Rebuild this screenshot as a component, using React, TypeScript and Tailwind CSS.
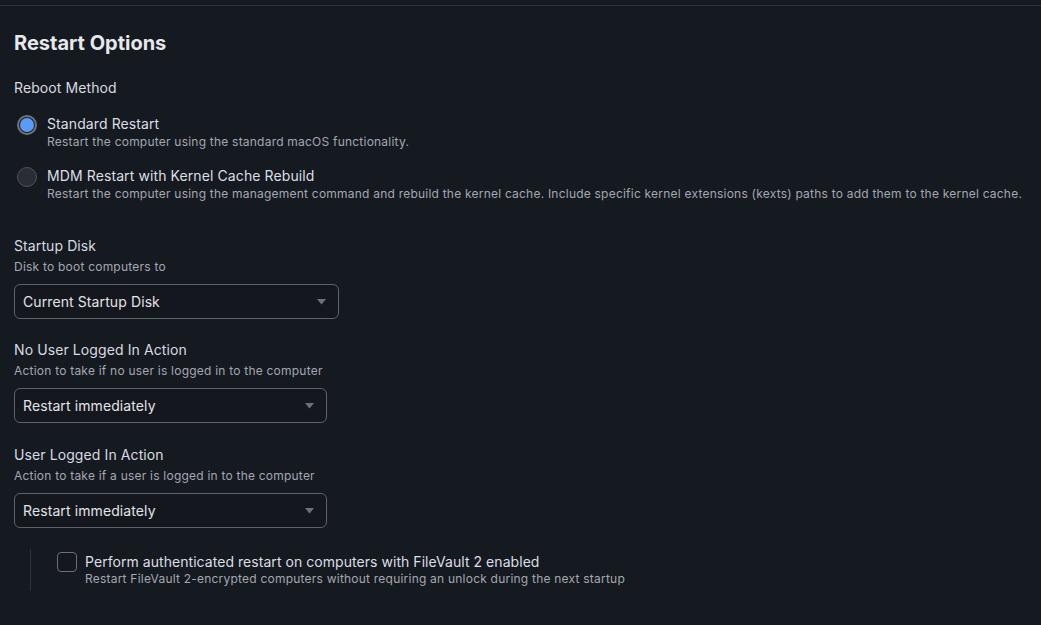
import React from "react";

function Caret() {
  return (
    <svg width="9" height="6" viewBox="0 0 9 6" className="shrink-0">
      <path d="M0 0 L9 0 L4.5 5.5 Z" fill="#6b7079" />
    </svg>
  );
}

function Select({ value, width }: { value: string; width: string }) {
  return (
    <div
      className={`mt-[9px] flex h-[35px] items-center justify-between rounded-[6px] border border-[#5d626b] bg-[#14171d] pl-[8px] pr-[12px] text-[14px] tracking-[0.1px] text-[#e2e4e8] ${width}`}
    >
      <span>{value}</span>
      <Caret />
    </div>
  );
}

function Field({
  label,
  desc,
  value,
  width,
  className,
}: {
  label: string;
  desc: string;
  value: string;
  width: string;
  className?: string;
}) {
  return (
    <div className={className}>
      <div className="text-[14px] leading-[20px] tracking-[0.1px] text-[#d8dbe0]">{label}</div>
      <div className="mt-[3px] text-[12px] leading-[16px] tracking-[0.22px] text-[#a3a8b1]">{desc}</div>
      <Select value={value} width={width} />
    </div>
  );
}

function Radio({
  checked,
  label,
  desc,
  className,
}: {
  checked: boolean;
  label: string;
  desc: string;
  className?: string;
}) {
  return (
    <div className={`flex items-start ${className ?? ""}`}>
      <div className="flex w-[33px] shrink-0 pl-[3px]">
        {checked ? (
          <div className="flex h-[20px] w-[20px] items-center justify-center rounded-full border-[2px] border-[#6f747d] bg-[#1b1f26]">
            <div className="h-[14px] w-[14px] rounded-full bg-[#5b9bf7]" />
          </div>
        ) : (
          <div className="h-[20px] w-[20px] rounded-full border border-[#4d525b] bg-[#2a2d34]" />
        )}
      </div>
      <div>
        <div className="text-[14px] leading-[18px] tracking-[0.1px] text-[#dcdfe4]">{label}</div>
        <div className="mt-[1px] text-[12px] leading-[16px] tracking-[0.22px] text-[#a3a8b1]">{desc}</div>
      </div>
    </div>
  );
}

export default function App() {
  return (
    <div
      className="min-h-[625px] w-full bg-[#151920] pt-[5px]"
      style={{ fontFamily: "Inter, 'Noto Sans', sans-serif" }}
    >
      <div className="border-t border-[#2d3139]" />
      <div className="px-[14px] pt-[23px]">
        <h1 className="text-[20px] font-bold leading-[28px] text-[#e6e8eb]">Restart Options</h1>
        <div className="mt-[21px] text-[14px] leading-[20px] tracking-[0.1px] text-[#d8dbe0]">Reboot Method</div>
        <Radio
          className="mt-[17px]"
          checked
          label="Standard Restart"
          desc="Restart the computer using the standard macOS functionality."
        />
        <Radio
          className="mt-[17px]"
          checked={false}
          label="MDM Restart with Kernel Cache Rebuild"
          desc="Restart the computer using the management command and rebuild the kernel cache. Include specific kernel extensions (kexts) paths to add them to the kernel cache."
        />
        <Field
          className="mt-[34px]"
          label="Startup Disk"
          desc="Disk to boot computers to"
          value="Current Startup Disk"
          width="w-[325px]"
        />
        <Field
          className="mt-[21px]"
          label="No User Logged In Action"
          desc="Action to take if no user is logged in to the computer"
          value="Restart immediately"
          width="w-[313px]"
        />
        <Field
          className="mt-[22px]"
          label="User Logged In Action"
          desc="Action to take if a user is logged in to the computer"
          value="Restart immediately"
          width="w-[313px]"
        />
        <div className="ml-[16px] mt-[21px] flex h-[42px] items-start border-l border-[#2d3139] pl-[26px] pt-[3px]">
          <div className="h-[20px] w-[20px] shrink-0 rounded-[4px] border border-[#6a6f78] bg-[#14171d]" />
          <div className="ml-[8px]">
            <div className="text-[14px] leading-[19px] tracking-[0.05px] text-[#dcdfe4]">
              Perform authenticated restart on computers with FileVault 2 enabled
            </div>
            <div className="text-[12px] leading-[16px] tracking-[0.22px] text-[#a3a8b1]">
              Restart FileVault 2-encrypted computers without requiring an unlock during the next startup
            </div>
          </div>
        </div>
      </div>
    </div>
  );
}
